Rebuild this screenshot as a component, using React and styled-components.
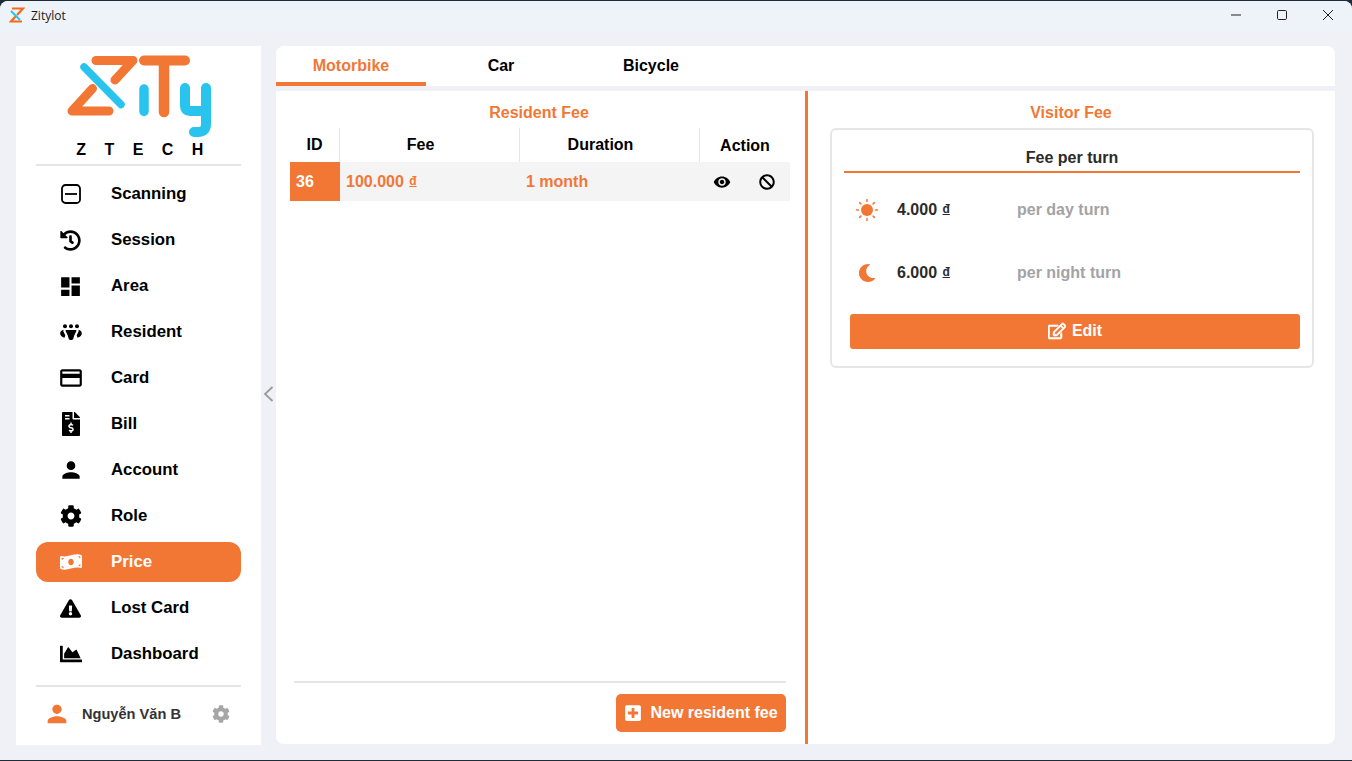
import React from "react";
import styled, { createGlobalStyle } from "styled-components";
import {
  MdDashboard,
  MdOutlineCreditCard,
  MdPerson,
  MdVisibility,
} from "react-icons/md";
import {
  FaFileInvoiceDollar,
  FaCog,
  FaHistory,
  FaMoneyBillWave,
  FaExclamationTriangle,
  FaChartArea,
  FaBan,
  FaRegEdit,
  FaPlusSquare,
  FaMoon,
} from "react-icons/fa";

const ORANGE = "#f27735";
const BLUE = "#29c4ee";

function ScanIcon() {
  return (
    <svg width="20" height="20" viewBox="0 0 20 20" fill="none" stroke="currentColor" strokeWidth="1.8">
      <rect x="1" y="1" width="18" height="18" rx="3.5" />
      <path d="M4 10h12" />
    </svg>
  );
}

function PeopleIcon() {
  return (
    <svg width="22" height="16" viewBox="0 0 22 16" fill="currentColor">
      <circle cx="5" cy="2.3" r="2" />
      <circle cx="11" cy="2.3" r="2" />
      <circle cx="17" cy="2.3" r="2" />
      <path d="M6.4 6h9.2c.6 0 1 .5.8 1.1l-2.2 4.4-.9 3.3c-.2.7-.8 1.2-1.5 1.2h-1.6c-.7 0-1.3-.5-1.5-1.2l-.9-3.3-2.2-4.4C5.4 6.500 5.800 6 6.400 6z" />
      <path d="M3.800 5.800C1.500 6 .2 7.600.2 9.500c0 1.900 1.400 3.400 4.300 4.300l.8-2.600L3.400 7.500c-.2-.6 0-1.200.4-1.700z" />
      <path d="M18.200 5.800c2.300.2 3.600 1.800 3.600 3.700 0 1.900-1.400 3.400-4.300 4.300l-.8-2.600 1.900-3.700c.2-.6 0-1.200-.4-1.700z" />
    </svg>
  );
}

function SunIcon() {
  return (
    <svg width="24" height="24" viewBox="0 0 24 24" fill="none" stroke="currentColor" strokeWidth="1.5" strokeLinecap="round">
      <circle cx="12" cy="12" r="6" fill="currentColor" stroke="none" />
      <path d="M12 1.500v2M12 20.500v2M1.500 12h2M20.500 12h2M4.600 4.600l1.300 1.300M18.100 18.100l1.300 1.300M4.600 19.400l1.300-1.300M18.100 5.900l1.300-1.300" />
    </svg>
  );
}

const navItems = [
  { label: "Scanning", icon: ScanIcon },
  { label: "Session", icon: FaHistory, size: 21 },
  { label: "Area", icon: MdDashboard, size: 25 },
  { label: "Resident", icon: PeopleIcon },
  { label: "Card", icon: MdOutlineCreditCard, size: 26 },
  { label: "Bill", icon: FaFileInvoiceDollar, size: 24 },
  { label: "Account", icon: MdPerson, size: 26 },
  { label: "Role", icon: FaCog, size: 22 },
  { label: "Price", icon: FaMoneyBillWave, size: 22, active: true },
  { label: "Lost Card", icon: FaExclamationTriangle, size: 21 },
  { label: "Dashboard", icon: FaChartArea, size: 22 },
];

const tabs = ["Motorbike", "Car", "Bicycle"];

function Logo({ size, small }) {
  if (small) {
    return (
      <svg width={size} height={size} viewBox="0 0 16 16" fill="none">
        <path d="M3 1.500h11L8 8" stroke="#f26a1b" strokeWidth="2.200" />
        <path d="M7 9l-5 5.500h11" stroke="#f26a1b" strokeWidth="2.200" />
        <path d="M2 4l9 9" stroke={BLUE} strokeWidth="2" />
      </svg>
    );
  }
  return (
    <svg width="146" height="84" viewBox="66 54 146 84" fill="none" strokeLinecap="round" strokeLinejoin="round">
      <path d="M95 60.500H132L114 80" stroke={ORANGE} strokeWidth="9" />
      <path d="M91.500 88.500L71 111H108" stroke={ORANGE} strokeWidth="9" />
      <path d="M83 67L120 104.500" stroke={BLUE} strokeWidth="7.500" />
      <path d="M143 89V111.500" stroke={BLUE} strokeWidth="9.500" />
      <path d="M143 60.500H184" stroke={ORANGE} strokeWidth="10" />
      <path d="M163 61V112" stroke={ORANGE} strokeWidth="10.500" />
      <path d="M184 88V106Q184 111 189 111H205" stroke={BLUE} strokeWidth="10" />
      <path d="M205 88V124Q205 132 197 132H193" stroke={BLUE} strokeWidth="10" />
    </svg>
  );
}

function Money({ value, orange }) {
  return (
    <Amount $orange={orange}>
      {value} <Dong>đ</Dong>
    </Amount>
  );
}

export default function App() {
  return (
    <>
      <GlobalStyle />
      <Desktop>
        <AppWindow>
          <TitleBar>
            <TitleLeft>
              <Logo small size={16} />
              <span>Zitylot</span>
            </TitleLeft>
            <WindowControls>
              <svg width="12" height="12" viewBox="0 0 12 12"><path d="M1 6h10" stroke="#222" /></svg>
              <svg width="12" height="12" viewBox="0 0 12 12"><rect x="1.500" y="1.500" width="9" height="9" rx="1.200" fill="none" stroke="#222" /></svg>
              <svg width="12" height="12" viewBox="0 0 12 12"><path d="M1 1l10 10M11 1L1 11" stroke="#222" /></svg>
            </WindowControls>
          </TitleBar>
          <Body>
            <Sidebar>
              <LogoBox>
                <Logo />
                <Brand>ZTECH</Brand>
              </LogoBox>
              <NavList>
                {navItems.map((item) => {
                  const Icon = item.icon;
                  return (
                    <NavItem key={item.label} $active={item.active}>
                      <NavIcon>
                        <Icon size={item.size} />
                      </NavIcon>
                      {item.label}
                    </NavItem>
                  );
                })}
              </NavList>
              <UserRow>
                <UserIcon>
                  <MdPerson size={28} />
                </UserIcon>
                <UserName>Nguyễn Văn B</UserName>
                <GearIcon>
                  <FaCog size={18} />
                </GearIcon>
              </UserRow>
            </Sidebar>
            <CollapseRail>
              <svg width="11" height="16" viewBox="0 0 11 16" fill="none" stroke="currentColor" strokeWidth="1.800">
                <path d="M9.500 1L2 8l7.500 7" />
              </svg>
            </CollapseRail>
            <Main>
              <TabBar>
                {tabs.map((tab, i) => (
                  <Tab key={tab} $active={i === 0}>
                    {tab}
                  </Tab>
                ))}
              </TabBar>
              <Content>
                <ResidentPane>
                  <PaneTitle>Resident Fee</PaneTitle>
                  <Table>
                    <HeadCell>ID</HeadCell>
                    <HeadCell $shifted>Fee</HeadCell>
                    <HeadCell $shifted>Duration</HeadCell>
                    <HeadCell $last>Action</HeadCell>
                    <IdCell>36</IdCell>
                    <RowCell>
                      <Money value="100.000" orange />
                    </RowCell>
                    <RowCell>1 month</RowCell>
                    <ActionCell>
                      <MdVisibility size={18} />
                      <FaBan size={16} />
                    </ActionCell>
                  </Table>
                  <PaneFooter>
                    <PrimaryButton>
                      <FaPlusSquare size={18} />
                      New resident fee
                    </PrimaryButton>
                  </PaneFooter>
                </ResidentPane>
                <VisitorPane>
                  <PaneTitle>Visitor Fee</PaneTitle>
                  <FeeCard>
                    <CardTitle>Fee per turn</CardTitle>
                    <TurnRow>
                      <TurnIcon>
                        <SunIcon />
                      </TurnIcon>
                      <TurnPrice>
                        <Money value="4.000" />
                      </TurnPrice>
                      <TurnLabel>per day turn</TurnLabel>
                    </TurnRow>
                    <TurnRow>
                      <TurnIcon>
                        <FaMoon size={18} />
                      </TurnIcon>
                      <TurnPrice>
                        <Money value="6.000" />
                      </TurnPrice>
                      <TurnLabel>per night turn</TurnLabel>
                    </TurnRow>
                    <EditButton>
                      <FaRegEdit size={18} stroke="currentColor" strokeWidth={20} />
                      Edit
                    </EditButton>
                  </FeeCard>
                </VisitorPane>
              </Content>
            </Main>
          </Body>
        </AppWindow>
      </Desktop>
    </>
  );
}

const GlobalStyle = createGlobalStyle`
  html, body {
    margin: 0;
    padding: 0;
    overflow: hidden;
  }
  * {
    box-sizing: border-box;
  }
  body {
    font-family: "Liberation Sans", Arial, sans-serif;
  }
`;

const Desktop = styled.div`
  width: 1352px;
  height: 761px;
  background: #1d2b3a;
  padding-top: 1px;
`;

const AppWindow = styled.div`
  height: 759px;
  background: #eff1f6;
  border-radius: 8px 8px 0 0;
  display: flex;
  flex-direction: column;
`;

const TitleBar = styled.div`
  height: 31px;
  padding: 0 0 3px 9px;
  background: #eef2f9;
  border-radius: 8px 8px 0 0;
  display: flex;
  align-items: center;
  justify-content: space-between;
  flex-shrink: 0;
`;

const TitleLeft = styled.div`
  display: flex;
  align-items: center;
  gap: 6px;
  font-family: "Open Sans", sans-serif;
  font-size: 12px;
  color: #1a1a1a;
`;

const WindowControls = styled.div`
  display: flex;
  align-items: center;
  gap: 34px;
  padding-right: 18px;
`;

const Body = styled.div`
  flex: 1;
  display: flex;
  padding: 14px 17px 15px 16px;
  min-height: 0;
`;

const Sidebar = styled.aside`
  width: 245px;
  background: #fff;
  display: flex;
  flex-direction: column;
  padding: 8px 20px 0;
  flex-shrink: 0;
`;

const LogoBox = styled.div`
  height: 112px;
  border-bottom: 2px solid #e4e4e4;
  display: flex;
  flex-direction: column;
  align-items: center;
  padding-left: 3px;
`;

const Brand = styled.div`
  margin-top: 3px;
  font-size: 16px;
  font-weight: 700;
  letter-spacing: 18.4px;
  line-height: 18px;
  color: #000;
  padding-left: 18px;
`;

const NavList = styled.nav`
  display: flex;
  flex-direction: column;
  gap: 6px;
  padding: 8px 0 11px;
  border-bottom: 2px solid #e4e4e4;
`;

const NavItem = styled.div`
  height: 40px;
  display: flex;
  align-items: center;
  border-radius: 12px;
  font-size: 16.8px;
  font-weight: 700;
  color: ${(p) => (p.$active ? "#fff" : "#000")};
  background: ${(p) => (p.$active ? ORANGE : "transparent")};
`;

const NavIcon = styled.span`
  width: 69px;
  margin-right: 6px;
  display: flex;
  align-items: center;
  justify-content: center;
  flex-shrink: 0;
`;

const UserRow = styled.div`
  flex: 1;
  display: flex;
  align-items: center;
  padding-bottom: 4px;
`;

const UserIcon = styled.span`
  width: 42px;
  display: flex;
  justify-content: center;
  color: ${ORANGE};
`;

const UserName = styled.span`
  margin-left: 4px;
  width: 120px;
  font-size: 14.6px;
  font-weight: 700;
  color: #333;
`;

const GearIcon = styled.span`
  display: flex;
  color: #a6a6a6;
  margin-left: 10px;
`;

const CollapseRail = styled.div`
  width: 15px;
  display: flex;
  align-items: center;
  justify-content: center;
  padding-bottom: 4px;
  color: #9a9a9a;
  flex-shrink: 0;
`;

const Main = styled.main`
  flex: 1;
  min-width: 0;
  display: flex;
  flex-direction: column;
  gap: 5px;
  padding-bottom: 1px;
`;

const TabBar = styled.div`
  height: 40px;
  background: #fff;
  border-radius: 8px 8px 0 0;
  display: flex;
  flex-shrink: 0;
`;

const Tab = styled.div`
  width: 150px;
  display: flex;
  align-items: center;
  justify-content: center;
  padding-top: 4px;
  font-size: 16px;
  font-weight: 700;
  color: ${(p) => (p.$active ? ORANGE : "#000")};
  border-bottom: 4px solid ${(p) => (p.$active ? ORANGE : "transparent")};
`;

const Content = styled.div`
  flex: 1;
  min-height: 0;
  background: #fff;
  border-radius: 0 0 8px 8px;
  display: flex;
`;

const ResidentPane = styled.section`
  width: 532px;
  padding: 0 15px 12px 14px;
  border-right: 3px solid ${ORANGE};
  display: flex;
  flex-direction: column;
`;

const VisitorPane = styled.section`
  flex: 1;
  padding: 0 21px 0 22px;
`;

const PaneTitle = styled.h2`
  margin: 0;
  height: 37px;
  display: flex;
  align-items: center;
  justify-content: center;
  padding: 7px 2px 0 0;
  font-size: 16px;
  font-weight: 700;
  color: ${ORANGE};
`;

const Table = styled.div`
  width: 500px;
  display: grid;
  grid-template-columns: 50px 180px 180px 90px;
  grid-template-rows: 34px 39px;
`;

const HeadCell = styled.div`
  display: flex;
  align-items: center;
  justify-content: center;
  padding-top: ${(p) => (p.$last ? "1px" : "0")};
  padding-right: ${(p) => (p.$shifted ? "18px" : "0")};
  font-size: 16px;
  font-weight: 700;
  color: #000;
  border-right: ${(p) => (p.$last ? "none" : "1px solid #e4e4e4")};
`;

const RowCell = styled.div`
  display: flex;
  align-items: center;
  padding-left: 6px;
  background: #f4f4f5;
  font-size: 16px;
  font-weight: 700;
  color: ${ORANGE};
`;

const IdCell = styled(RowCell)`
  background: ${ORANGE};
  color: #fff;
`;

const ActionCell = styled(RowCell)`
  padding: 0 15px 0 13px;
  justify-content: space-between;
  color: #000;
`;

const Amount = styled.span`
  font-size: 16px;
  font-weight: 700;
  color: ${(p) => (p.$orange ? ORANGE : "#2b2b2b")};
`;

const Dong = styled.span`
  font-size: 12px;
  text-decoration: underline;
  position: relative;
  top: -2px;
  margin-left: 1px;
`;

const PaneFooter = styled.div`
  margin-top: auto;
  border-top: 2px solid #e4e4e4;
  margin-left: 4px;
  margin-right: 4px;
  padding-top: 11px;
  display: flex;
  justify-content: flex-end;
`;

const PrimaryButton = styled.button`
  height: 38px;
  width: 170px;
  border: none;
  border-radius: 5px;
  background: ${ORANGE};
  color: #fff;
  font-family: inherit;
  font-size: 16px;
  font-weight: 700;
  display: flex;
  align-items: center;
  justify-content: center;
  gap: 8px;
  padding: 0;
`;

const FeeCard = styled.div`
  width: 484px;
  height: 240px;
  border: 2px solid #e6e6e6;
  border-radius: 6px;
  padding: 0 12px;
  display: flex;
  flex-direction: column;
`;

const CardTitle = styled.div`
  height: 43px;
  margin-bottom: 5px;
  border-bottom: 2px solid ${ORANGE};
  display: flex;
  align-items: center;
  justify-content: center;
  padding-top: 15px;
  font-size: 16px;
  font-weight: 700;
  color: #2b2b2b;
  flex-shrink: 0;
`;

const TurnRow = styled.div`
  height: 63px;
  display: flex;
  align-items: center;
  padding-left: 5px;
  flex-shrink: 0;
`;

const TurnIcon = styled.span`
  width: 35px;
  margin-right: 13px;
  display: flex;
  justify-content: center;
  color: ${ORANGE};
`;

const TurnPrice = styled.span`
  width: 120px;
`;

const TurnLabel = styled.span`
  font-size: 16px;
  font-weight: 700;
  color: #a3a3a6;
`;

const EditButton = styled(PrimaryButton)`
  width: 450px;
  height: 35px;
  margin: 10px 0 0 6px;
  padding-bottom: 2px;
  border-radius: 3px;
  gap: 6px;
`;
